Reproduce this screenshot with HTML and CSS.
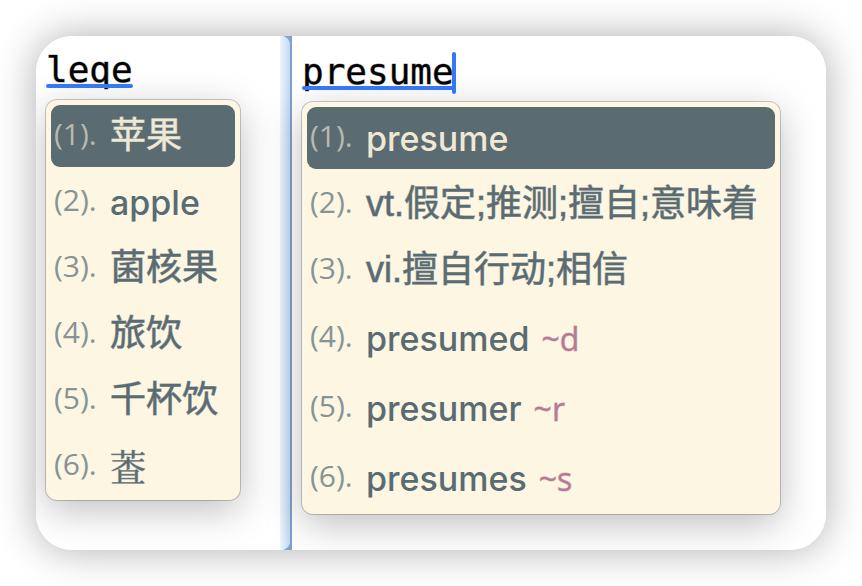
FILE: index.html
```
<!DOCTYPE html>
<html lang="zh-CN">
<head>
<meta charset="utf-8">
<title>Input candidates</title>
<link rel="stylesheet" href="styles.css">
</head>
<body>
<main class="card">
  <section class="pane">
    <div class="preedit">
      <input class="preedit-input short" type="text" value="leqe" aria-label="Code" spellcheck="false">
    </div>
    <ol class="panel">
      <li><button class="candidate selected"><span class="index">(1).</span><span class="word">苹果</span></button></li>
      <li><button class="candidate"><span class="index">(2).</span><span class="word latin">apple</span></button></li>
      <li><button class="candidate"><span class="index">(3).</span><span class="word">菌核果</span></button></li>
      <li><button class="candidate"><span class="index">(4).</span><span class="word">旅饮</span></button></li>
      <li><button class="candidate"><span class="index">(5).</span><span class="word">千杯饮</span></button></li>
      <li><button class="candidate"><span class="index">(6).</span><span class="word rare">&#x26CD8;</span></button></li>
    </ol>
  </section>
  <div class="divider"></div>
  <section class="pane lower">
    <div class="preedit active">
      <input class="preedit-input long" type="text" value="presume" aria-label="Word" spellcheck="false">
    </div>
    <ol class="panel">
      <li><button class="candidate selected"><span class="index">(1).</span><span class="word latin">presume</span></button></li>
      <li><button class="candidate"><span class="index">(2).</span><span class="word">vt.假定;推测;擅自;意味着</span></button></li>
      <li><button class="candidate"><span class="index">(3).</span><span class="word">vi.擅自行动;相信</span></button></li>
      <li><button class="candidate tall"><span class="index">(4).</span><span class="word latin">presumed</span><span class="hint">~d</span></button></li>
      <li><button class="candidate tall"><span class="index">(5).</span><span class="word latin">presumer</span><span class="hint">~r</span></button></li>
      <li><button class="candidate tall"><span class="index">(6).</span><span class="word latin">presumes</span><span class="hint">~s</span></button></li>
    </ol>
  </section>
</main>
</body>
</html>
```
FILE: styles.css
```
* { box-sizing: border-box; }

body {
  margin: 0;
  padding: 36px;
  background: #fff;
  font-family: "Liberation Sans", "Noto Sans CJK SC", sans-serif;
}

.card {
  display: grid;
  grid-template-columns: minmax(0, 244px) 12px minmax(0, 1fr);
  border-radius: 36px;
  overflow: hidden;
  background: #fff;
  box-shadow: 0 0 40px rgba(0, 0, 0, 0.32);
}

.pane {
  min-width: 0;
  padding: 14px 10px 36px;
  background: #fff;
}

.pane.lower {
  padding-top: 16px;
}

.divider {
  background:
    radial-gradient(circle at 0 10px, transparent 10px, #86a5cc 11px) 0 0 / 10px 10px no-repeat,
    radial-gradient(circle at 0 0, transparent 10px, #86a5cc 11px) 0 100% / 10px 10px no-repeat,
    linear-gradient(90deg, #eef5fd, #c2d8f2 10px, #7da0cd 10px, #7da0cd);
}

.preedit {
  position: relative;
  width: fit-content;
  height: 42px;
  margin-bottom: 8px;
}

.preedit::after {
  content: "";
  position: absolute;
  left: 0;
  right: 0;
  bottom: 4px;
  height: 4px;
  border-radius: 2px;
  background: #3478f6;
}

.preedit.active::before {
  content: "";
  position: absolute;
  top: 0;
  right: -2px;
  bottom: 0;
  width: 4px;
  border-radius: 2px;
  background: #3478f6;
}

.preedit-input {
  display: block;
  height: 42px;
  padding: 0 0 4px;
  border: 0;
  outline: 0;
  background: transparent;
  color: #000;
  font: 36px/38px "DejaVu Sans Mono", monospace;
  -webkit-text-stroke: 1px rgba(0, 0, 0, 0.4);
}

.short { width: 4ch; }
.long { width: 7ch; }

.panel {
  display: flex;
  flex-direction: column;
  gap: 4px;
  width: fit-content;
  margin: 0;
  padding: 5px 5px 3px;
  list-style: none;
  border-radius: 11px;
  background: #fcf6e3;
  box-shadow: 0 0 0 1px rgba(0, 0, 0, 0.2), 0 10px 38px rgba(0, 0, 0, 0.26);
}

.candidate {
  display: flex;
  align-items: center;
  width: 100%;
  height: 62px;
  padding: 0 17px 0 3px;
  border: 0;
  border-radius: 9px;
  background: transparent;
  color: #5a6b72;
  font-family: inherit;
  font-size: 36px;
  line-height: 48px;
  text-align: left;
  white-space: nowrap;
}

.candidate.tall { height: 66px; }

.candidate.selected {
  background: #5a6b72;
  color: #eee8d5;
}

.index {
  flex: none;
  width: 56px;
  padding-bottom: 4px;
  color: #869494;
  font-family: "Open Sans", sans-serif;
  font-size: 30px;
}

.selected .index { color: #b9b9af; }

.word { -webkit-text-stroke: 1px rgba(90, 107, 114, 0.6); }

.selected .word { -webkit-text-stroke-color: rgba(238, 232, 213, 0.6); }

.latin,
.selected .latin {
  padding-top: 2px;
  font-family: Inter, sans-serif;
  font-size: 34px;
  font-weight: 500;
  -webkit-text-stroke: 0;
}

.rare { font-family: "Noto Serif CJK SC", serif; }

.hint {
  margin-left: 12px;
  padding-top: 2px;
  color: #b57a94;
  font-family: "Open Sans", sans-serif;
  font-size: 32px;
  -webkit-text-stroke: 1px rgba(181, 122, 148, 0.5);
}
```
